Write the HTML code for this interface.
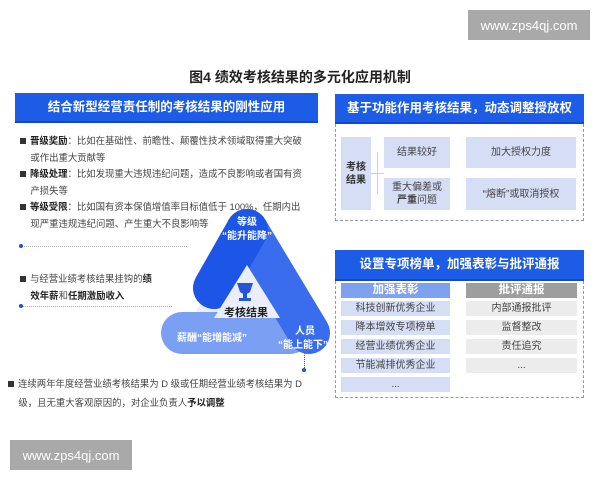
<!DOCTYPE html>
<html><head><meta charset="utf-8"><style>
*{margin:0;padding:0;box-sizing:border-box}
body{width:600px;height:480px;background:#fff;position:relative;overflow:hidden;font-family:"Liberation Sans","Noto Sans CJK SC",sans-serif;color:#333}
.a{position:absolute}
.hd{position:absolute;background:#1d5ce6;color:#fff;font-weight:bold;font-size:12.5px;text-align:center;border-bottom:2px solid #1448c4}
.t{font-size:9.4px;line-height:16.5px;color:#444;white-space:nowrap}
.t b{color:#222}
.sq{display:inline-block;width:6px;height:6px;background:#333;margin-right:4px;vertical-align:0px}
.bx{position:absolute;background:#d6def5;font-size:10px;color:#444;text-align:center;display:flex;align-items:center;justify-content:center;line-height:13px}
.gy{background:#ececec}
.dot{position:absolute;border-top:1px dotted #aab;height:0}
.pt{position:absolute;width:4px;height:4px;border-radius:50%;background:#2a4fc4}
.wm{position:absolute;background:#a9a9a9;color:#fff;font-size:13px;display:flex;align-items:center;justify-content:center}
</style></head><body>
<div class="wm" style="left:468px;top:10px;width:122px;height:30px">www.zps4qj.com</div>
<div class="a" style="left:0;top:67px;width:600px;text-align:center;font-size:14px;font-weight:bold;color:#222">图4 绩效考核结果的多元化应用机制</div>

<div class="hd" style="left:15px;top:93px;width:303px;height:30px;line-height:28px">结合新型经营责任制的考核结果的刚性应用</div>
<div class="a t" style="left:20px;top:133px"><span class="sq"></span><b>晋级奖励</b>：比如在基础性、前瞻性、颠覆性技术领域取得重大突破<br>&nbsp;&nbsp;&nbsp;&nbsp;或作出重大贡献等<br><span class="sq"></span><b>降级处理</b>：比如发现重大违规违纪问题，造成不良影响或者国有资<br>&nbsp;&nbsp;&nbsp;&nbsp;产损失等<br><span class="sq"></span><b>等级受限</b>：比如国有资本保值增值率目标值低于 100%，任期内出<br>&nbsp;&nbsp;&nbsp;&nbsp;现严重违规违纪问题、产生重大不良影响等</div>
<div class="dot" style="left:22px;top:246px;width:165px"></div><div class="pt" style="left:19px;top:244px"></div>
<div class="a t" style="left:20px;top:271px"><span class="sq"></span>与经营业绩考核结果挂钩的<b>绩</b><br>&nbsp;&nbsp;&nbsp;&nbsp;<b>效年薪</b>和<b>任期激励收入</b></div>
<div class="dot" style="left:22px;top:306px;width:150px"></div><div class="pt" style="left:19px;top:304px"></div>
<div class="a t" style="left:8px;top:374px;line-height:19px"><span class="sq"></span>连续两年年度经营业绩考核结果为 D 级或任期经营业绩考核结果为 D<br>&nbsp;&nbsp;&nbsp;&nbsp;级，且无重大客观原因的，对企业负责人<b>予以调整</b></div>
<div class="a" style="left:304px;top:352px;width:0;height:16px;border-left:1px dotted #2a4fc4"></div><div class="pt" style="left:302px;top:368px"></div>

<svg class="a" style="left:0;top:0" width="600" height="480">
<polygon points="247,232 182,333 310,333" fill="#e9eefa"/>
<line x1="182" y1="333" x2="290" y2="333" stroke="#7a9ff3" stroke-width="42" stroke-linecap="round"/>
<line x1="247" y1="230" x2="309" y2="333" stroke="#3a6ded" stroke-width="42" stroke-linecap="round"/>
<line x1="247" y1="230" x2="214" y2="288" stroke="#1d55e6" stroke-width="42" stroke-linecap="round"/>
<polygon points="247,265 214,318 280,318" fill="#e9eefa"/>
<path d="M237 283h16l-3 9q-5 4-10 0z" fill="#2556d8"/><rect x="243" y="292" width="4" height="6" fill="#2556d8"/><rect x="239" y="298" width="12" height="3" fill="#2556d8"/>
<text x="246" y="316" font-size="11" font-weight="bold" fill="#222" text-anchor="middle">考核结果</text>
<text x="247" y="225" font-size="10" font-weight="bold" fill="#fff" text-anchor="middle">等级</text>
<text x="247" y="239" font-size="10" font-weight="bold" fill="#fff" text-anchor="middle">“能升能降”</text>
<text x="212" y="341" font-size="10" font-weight="bold" fill="#fff" text-anchor="middle">薪酬“能增能减”</text>
<text x="305" y="334" font-size="10" font-weight="bold" fill="#fff" text-anchor="middle">人员</text>
<text x="303" y="348" font-size="10" font-weight="bold" fill="#fff" text-anchor="middle">“能上能下”</text>
</svg>

<div class="hd" style="left:335px;top:94px;width:249px;height:30px;line-height:28px">基于功能作用考核结果，动态调整授放权</div>
<div class="a" style="left:335px;top:124px;width:249px;height:97px;border:1px dashed #999;border-top:none"></div>
<div class="bx" style="left:341px;top:137px;width:30px;height:73px;font-weight:bold;color:#333"><span>考核<br>结果</span></div>
<div class="a" style="left:371px;top:173px;width:13px;border-top:1px solid #ccd"></div>
<div class="a" style="left:377px;top:152px;height:42px;border-left:1px solid #ccd"></div>
<div class="bx" style="left:384px;top:137px;width:66px;height:31px">结果较好</div>
<div class="bx" style="left:384px;top:178px;width:66px;height:32px"><span>重大偏差或<br><b>严重</b>问题</span></div>
<div class="bx" style="left:466px;top:137px;width:110px;height:31px">加大授权力度</div>
<div class="bx" style="left:466px;top:178px;width:110px;height:32px">“熔断”或取消授权</div>

<div class="hd" style="left:335px;top:250px;width:249px;height:31px;line-height:29px">设置专项榜单，加强表彰与批评通报</div>
<div class="a" style="left:335px;top:281px;width:249px;height:117px;border:1px dashed #999;border-top:none"></div>
<div class="bx" style="left:341px;top:283px;width:109px;height:15px;background:#7ea1f0;color:#fff;font-weight:bold;font-size:11.5px">加强表彰</div>
<div class="bx" style="left:341px;top:301px;width:109px;height:15px">科技创新优秀企业</div>
<div class="bx" style="left:341px;top:320px;width:109px;height:15px">降本增效专项榜单</div>
<div class="bx" style="left:341px;top:339px;width:109px;height:15px">经营业绩优秀企业</div>
<div class="bx" style="left:341px;top:358px;width:109px;height:15px">节能减排优秀企业</div>
<div class="bx" style="left:341px;top:377px;width:109px;height:15px">...</div>
<div class="bx" style="left:466px;top:283px;width:111px;height:15px;background:#9e9e9e;color:#fff;font-weight:bold;font-size:11.5px">批评通报</div>
<div class="bx gy" style="left:466px;top:301px;width:111px;height:15px">内部通报批评</div>
<div class="bx gy" style="left:466px;top:320px;width:111px;height:15px">监督整改</div>
<div class="bx gy" style="left:466px;top:339px;width:111px;height:15px">责任追究</div>
<div class="bx gy" style="left:466px;top:358px;width:111px;height:15px">...</div>

<div class="wm" style="left:10px;top:440px;width:122px;height:30px">www.zps4qj.com</div>
</body></html>
